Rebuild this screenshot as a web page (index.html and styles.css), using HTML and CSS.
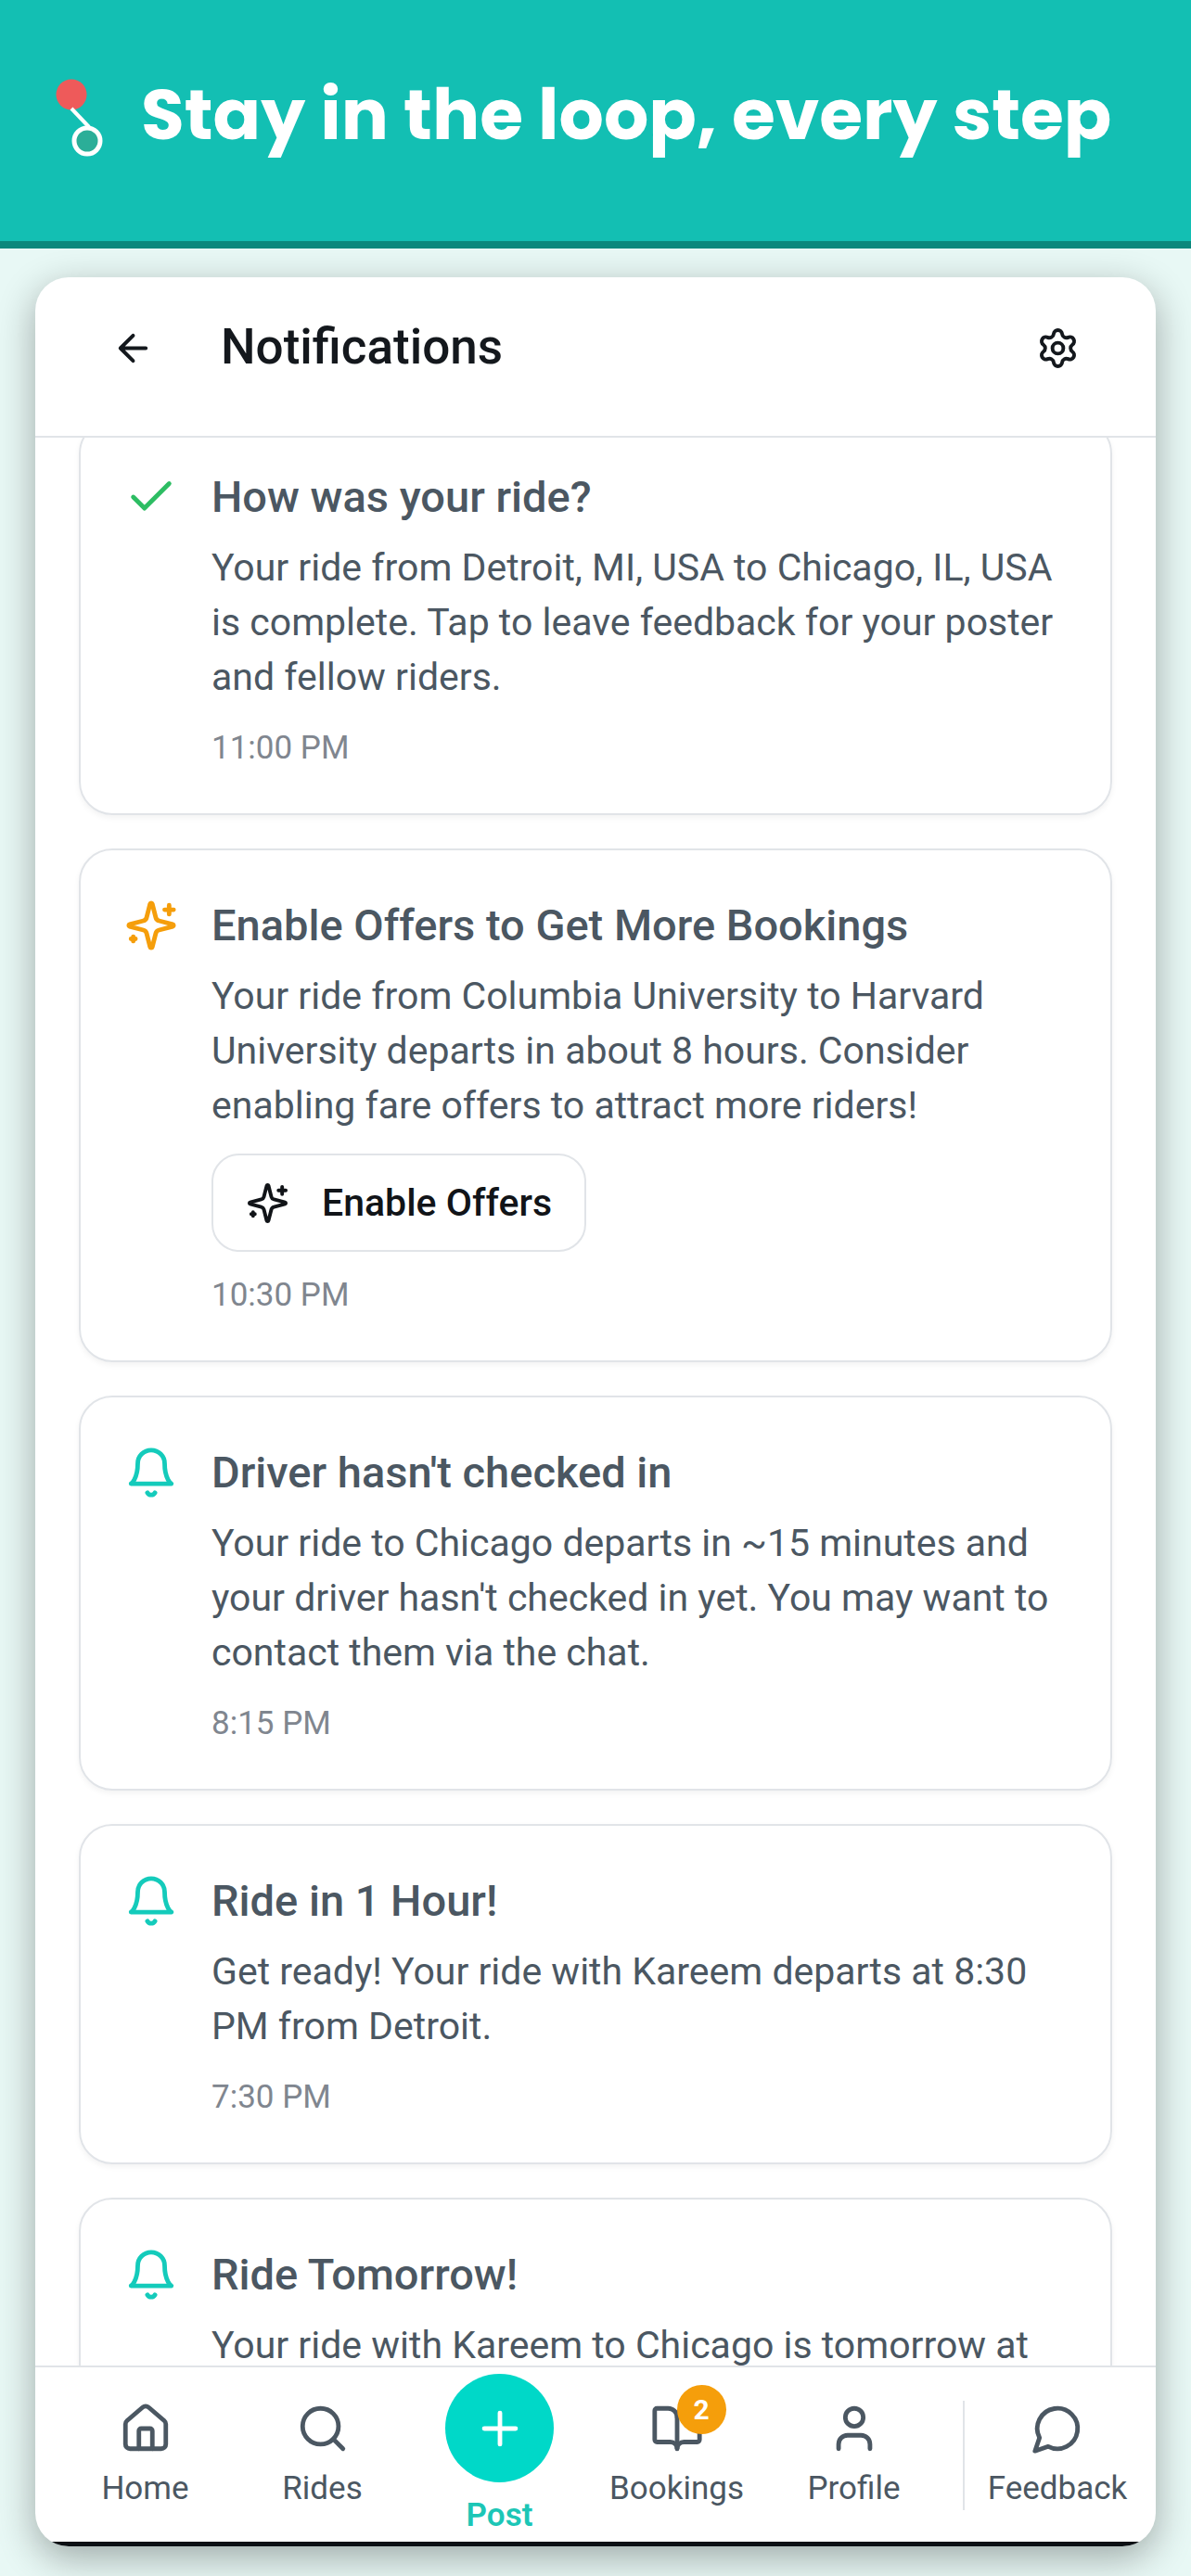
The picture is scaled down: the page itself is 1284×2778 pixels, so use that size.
FILE: index.html
```html
<!DOCTYPE html>
<html lang="en">
<head>
  <meta charset="UTF-8">
  <meta name="viewport" content="width=device-width, initial-scale=1">
  <title>Notifications</title>
  <link rel="stylesheet" href="styles.css">
</head>
<body>
  <!-- shared icons -->
  <svg class="sprite" aria-hidden="true">
    <symbol id="sparkles" viewBox="0 0 24 24">
      <path d="M9.937 15.5A2 2 0 0 0 8.5 14.063l-6.135-1.582a.5.5 0 0 1 0-.962L8.5 9.936A2 2 0 0 0 9.937 8.5l1.582-6.135a.5.5 0 0 1 .963 0L14.063 8.5A2 2 0 0 0 15.5 9.937l6.135 1.581a.5.5 0 0 1 0 .964L15.5 14.063a2 2 0 0 0-1.437 1.437l-1.582 6.135a.5.5 0 0 1-.963 0z"/>
      <path d="M20 3v4M22 5h-4M4 17v2M5 18H3"/>
    </symbol>
    <symbol id="bell" viewBox="0 0 24 24">
      <path d="M6 8a6 6 0 0 1 12 0c0 7 3 9 3 9H3s3-2 3-9"/>
      <path d="M10.300 21a1.940 1.940 0 0 0 3.400 0"/>
    </symbol>
  </svg>

  <header class="banner">
    <svg class="logo" viewBox="0 0 52 84" aria-hidden="true">
      <circle cx="17" cy="17" r="16.500" fill="#ee5a5a"/>
      <circle cx="34" cy="67" r="14" fill="#2bae98" stroke="#fff" stroke-width="5"/>
      <path d="M17 32L36 52" stroke="#fff" stroke-width="4"/>
    </svg>
    <h1>Stay in the loop, every step</h1>
  </header>

  <div class="phone">
    <div class="topbar">
      <button class="icon-btn" aria-label="Back">
        <svg class="icon-sm" viewBox="0 0 24 24"><path d="M12 19l-7-7 7-7M19 12H5"/></svg>
      </button>
      <h2>Notifications</h2>
      <button class="icon-btn" aria-label="Settings">
        <svg class="icon-sm" viewBox="0 0 24 24">
          <path d="M9.671 4.136a2.34 2.34 0 0 1 4.659 0 2.34 2.34 0 0 0 3.319 1.915 2.34 2.34 0 0 1 2.33 4.033 2.34 2.34 0 0 0 0 3.831 2.34 2.34 0 0 1-2.33 4.033 2.34 2.34 0 0 0-3.319 1.915 2.34 2.34 0 0 1-4.659 0 2.34 2.34 0 0 0-3.32-1.915 2.34 2.34 0 0 1-2.33-4.033 2.34 2.34 0 0 0 0-3.831A2.34 2.34 0 0 1 6.35 6.051a2.34 2.34 0 0 0 3.319-1.915"/>
          <circle cx="12" cy="12" r="3"/>
        </svg>
      </button>
    </div>

    <main class="feed">
      <div class="list">
        <article class="card">
          <svg class="icon green" viewBox="0 0 24 24"><path d="M20 6L9 17l-5-5"/></svg>
          <div class="content">
            <h3>How was your ride?</h3>
            <p>Your ride from Detroit, MI, USA to Chicago, IL, USA is complete. Tap to leave feedback for your poster and fellow riders.</p>
            <time>11:00 PM</time>
          </div>
        </article>

        <article class="card">
          <svg class="icon amber"><use href="#sparkles"/></svg>
          <div class="content">
            <h3>Enable Offers to Get More Bookings</h3>
            <p>Your ride from Columbia University to Harvard University departs in about 8 hours. Consider enabling fare offers to attract more riders!</p>
            <button class="offers">
              <svg class="icon-sm"><use href="#sparkles"/></svg>
              Enable Offers
            </button>
            <time>10:30 PM</time>
          </div>
        </article>

        <article class="card">
          <svg class="icon teal"><use href="#bell"/></svg>
          <div class="content">
            <h3>Driver hasn't checked in</h3>
            <p>Your ride to Chicago departs in ~15 minutes and your driver hasn't checked in yet. You may want to contact them via the chat.</p>
            <time>8:15 PM</time>
          </div>
        </article>

        <article class="card">
          <svg class="icon teal"><use href="#bell"/></svg>
          <div class="content">
            <h3>Ride in 1 Hour!</h3>
            <p>Get ready! Your ride with Kareem departs at 8:30 PM from Detroit.</p>
            <time>7:30 PM</time>
          </div>
        </article>

        <article class="card">
          <svg class="icon teal"><use href="#bell"/></svg>
          <div class="content">
            <h3>Ride Tomorrow!</h3>
            <p>Your ride with Kareem to Chicago is tomorrow at</p>
          </div>
        </article>
      </div>
    </main>

    <nav class="tabs">
      <a class="tab" href="#home">
        <svg class="icon" viewBox="0 0 24 24">
          <path d="M15 21v-8a1 1 0 0 0-1-1h-4a1 1 0 0 0-1 1v8"/>
          <path d="M3 10a2 2 0 0 1 .709-1.528l7-5.999a2 2 0 0 1 2.582 0l7 5.999A2 2 0 0 1 21 10v9a2 2 0 0 1-2 2H5a2 2 0 0 1-2-2z"/>
        </svg>
        <span>Home</span>
      </a>
      <a class="tab" href="#rides">
        <svg class="icon" viewBox="0 0 24 24"><circle cx="11" cy="11" r="8"/><path d="M21 21l-4.300-4.300"/></svg>
        <span>Rides</span>
      </a>
      <a class="tab post" href="#post">
        <span class="plus"><svg class="icon" viewBox="0 0 24 24"><path d="M5 12h14M12 5v14"/></svg></span>
        <span>Post</span>
      </a>
      <a class="tab" href="#bookings">
        <span class="with-badge">
          <svg class="icon" viewBox="0 0 24 24">
            <path d="M12 7v14"/>
            <path d="M3 18a1 1 0 0 1-1-1V4a1 1 0 0 1 1-1h5a4 4 0 0 1 4 4 4 4 0 0 1 4-4h5a1 1 0 0 1 1 1v13a1 1 0 0 1-1 1h-6a3 3 0 0 0-3 3 3 3 0 0 0-3-3z"/>
          </svg>
          <span class="badge">2</span>
        </span>
        <span>Bookings</span>
      </a>
      <a class="tab" href="#profile">
        <svg class="icon" viewBox="0 0 24 24"><path d="M19 21v-2a4 4 0 0 0-4-4H9a4 4 0 0 0-4 4v2"/><circle cx="12" cy="7" r="4"/></svg>
        <span>Profile</span>
      </a>
      <span class="divider"></span>
      <a class="tab feedback" href="#feedback">
        <svg class="icon" viewBox="0 0 24 24"><path d="M7.900 20A9 9 0 1 0 4 16.100L2 22Z"/></svg>
        <span>Feedback</span>
      </a>
    </nav>
  </div>
</body>
</html>
```
FILE: styles.css
```css
* { box-sizing: border-box; }

body {
  margin: 0;
  height: 100vh;
  display: flex;
  flex-direction: column;
  background: #e8f8f5;
  font-family: Roboto, sans-serif;
  color: #4b5762;
}

h1, h2, h3, p { margin: 0; }
button { font: inherit; color: inherit; background: none; border: 0; padding: 0; cursor: pointer; }
a { color: inherit; text-decoration: none; }

svg { display: block; flex: none; fill: none; stroke-linecap: round; stroke-linejoin: round; }
.sprite { position: absolute; width: 0; height: 0; }
.icon, .icon-sm { stroke: currentColor; stroke-width: 2; }
.icon { width: 58px; height: 58px; }
.icon-sm { width: 47px; height: 47px; }
.green { color: #2dbd63; }
.amber { color: #f59e0b; }
.teal { color: #14cbbb; }

/* banner */
.banner {
  position: relative;
  z-index: 1;
  display: flex;
  align-items: center;
  gap: 40px;
  height: 268px;
  padding: 0 60px 6px;
  background: #13bfb3;
  border-bottom: 8px solid #0b887c;
}
.logo { width: 52px; height: 84px; stroke-linecap: butt; }
.banner h1 {
  padding-bottom: 6px;
  font-family: Poppins, Inter, sans-serif;
  font-size: 76px;
  font-weight: 700;
  line-height: 1;
  color: #fff;
  white-space: nowrap;
}

/* phone frame */
.phone {
  flex: 1;
  min-height: 0;
  display: flex;
  flex-direction: column;
  margin: 31px 38px 32px;
  background: #fff;
  border-radius: 36px;
  overflow: hidden;
  box-shadow: 0 12px 40px rgba(0, 0, 0, 0.32);
}

.topbar {
  display: flex;
  align-items: center;
  gap: 36px;
  padding: 18px 47px 36px;
  border-bottom: 2px solid #e1e4e8;
  color: #14181d;
}
.topbar h2 { flex: 1; padding-bottom: 4px; font-size: 53px; font-weight: 500; line-height: 70px; }
.icon-btn { display: grid; place-items: center; width: 117px; height: 117px; }

/* notifications */
.feed { flex: 1; min-height: 0; overflow: hidden; }
.list {
  display: flex;
  flex-direction: column;
  gap: 36px;
  margin-top: -19px;
  padding: 0 47px;
}
.card {
  display: flex;
  gap: 36px;
  padding: 47px;
  border: 2px solid #e1e4e8;
  border-radius: 36px;
  box-shadow: 0 3px 6px rgba(0, 0, 0, 0.05);
}
.card > .icon { margin-top: 5px; }
.content { flex: 1; display: flex; flex-direction: column; align-items: flex-start; }
.content h3 { font-size: 47px; font-weight: 500; line-height: 68px; }
.content p { margin-top: 13px; font-size: 41px; line-height: 59px; }
.content time { margin-top: 24px; font-size: 35px; line-height: 46px; color: #80868f; }
.offers {
  display: flex;
  align-items: center;
  gap: 35px;
  height: 106px;
  margin-top: 22px;
  padding: 0 35px;
  border: 2px solid #e1e4e8;
  border-radius: 30px;
  font-size: 41px;
  font-weight: 500;
  color: #111418;
}

/* bottom tabs */
.tabs {
  display: flex;
  align-items: flex-start;
  height: 195px;
  padding: 0 12px 0 23px;
  border-top: 2px solid #e1e4e8;
  border-bottom: 5px solid #0c1014;
}
.tab {
  flex: 1;
  display: flex;
  flex-direction: column;
  align-items: center;
  gap: 12px;
  padding-top: 37px;
  font-size: 35px;
  line-height: 47px;
}
.post { padding-top: 7px; font-weight: 600; color: #1cc6b6; }
.plus {
  display: grid;
  place-items: center;
  width: 117px;
  height: 117px;
  border-radius: 50%;
  background: #00d8c8;
  color: #fff;
}
.with-badge { position: relative; }
.badge {
  position: absolute;
  top: -18px;
  right: -24px;
  width: 53px;
  height: 53px;
  border-radius: 50%;
  background: #f59e0b;
  color: #fff;
  font-size: 30px;
  font-weight: 700;
  line-height: 53px;
  text-align: center;
}
.divider { width: 2px; height: 118px; margin: 36px 6px 0 22px; background: #e1e4e8; }
.feedback { flex: 0 0 188px; }
```
